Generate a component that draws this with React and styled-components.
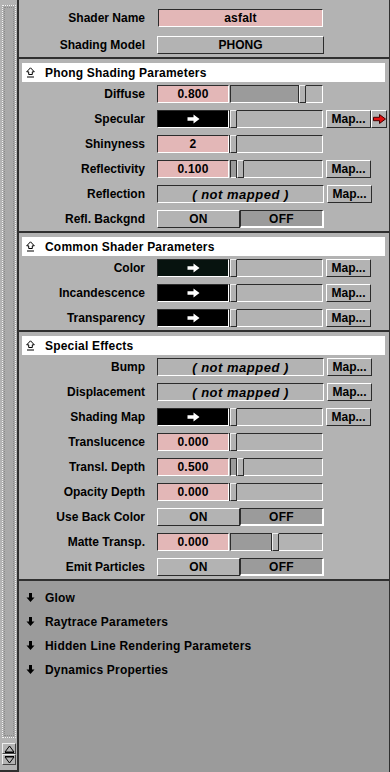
import styled, { createGlobalStyle } from "styled-components";

const GlobalStyle = createGlobalStyle`
  html, body {
    margin: 0;
    padding: 0;
    background: #b3b3b3;
    overflow: hidden;
  }
  body {
    font-family: "Liberation Sans", Arial, sans-serif;
    color: #000;
  }
  * {
    box-sizing: border-box;
  }
`;

const Frame = styled.div`
  display: flex;
  width: 390px;
  height: 772px;
`;

const ScrollBar = styled.div`
  width: 19px;
  flex-shrink: 0;
  border-right: 2px solid #303030;
  border-bottom: 2px solid #303030;
  display: flex;
  flex-direction: column;
  gap: 5px;
  padding: 5px 1px 5px 2px;
  background: #b3b3b3;
`;

const Trough = styled.div`
  flex: 1;
  border: 1px dotted #f4f4f4;
  outline: 1px dotted #8a8a8a;
  outline-offset: -3px;
  background: #a9a9a9;
`;

const StepButton = styled.div`
  height: 11px;
  border: 1px solid #444;
  border-top-color: #eee;
  border-left-color: #eee;
  background: #b3b3b3;
  display: flex;
  align-items: center;
  justify-content: center;
`;

const Main = styled.div`
  flex: 1;
  display: flex;
  flex-direction: column;
  border-right: 1px solid #303030;
  background: #b3b3b3;
`;

const TopBlock = styled.div`
  display: flex;
  flex-direction: column;
  gap: 9px;
  padding: 9px 0 3px;
`;

const Section = styled.section`
  border-top: 2px solid #303030;
  padding-top: 4px;
`;

const Header = styled.div`
  height: 19px;
  margin: 0 4px 0 3px;
  background: #fff;
  display: flex;
  align-items: center;
  gap: 10px;
  padding-left: 4px;
  font-weight: bold;
  font-size: 12px;
  letter-spacing: 0.2px;
`;

const Rows = styled.div`
  display: flex;
  flex-direction: column;
  gap: 7px;
  padding: 3px 0 3px;
`;

const Row = styled.div`
  display: flex;
  align-items: center;
  height: 18px;
`;

const Label = styled.div`
  width: 138px;
  padding-right: 12px;
  text-align: right;
  font-weight: bold;
  font-size: 12px;
  white-space: nowrap;
  flex-shrink: 0;
`;

const sunken = `
  border: 1px solid #fff;
  border-top-color: #2c2c2c;
  border-left-color: #2c2c2c;
`;

const raised = `
  border: 1px solid #2c2c2c;
  border-top-color: #fff;
  border-left-color: #fff;
`;

const Field = styled.div`
  ${sunken}
  height: 18px;
  width: ${(p) => p.$w || 72}px;
  margin-left: ${(p) => p.$ml || 0}px;
  background: ${(p) => p.$bg || "#e3b7b7"};
  display: flex;
  align-items: center;
  justify-content: center;
  font-weight: bold;
  font-size: ${(p) => (p.$italic ? 13 : 12)}px;
  letter-spacing: ${(p) => (p.$italic ? 0.5 : 0.2)}px;
  font-style: ${(p) => (p.$italic ? "italic" : "normal")};
  white-space: pre;
  flex-shrink: 0;
`;

const Button = styled.div`
  ${raised}
  height: 18px;
  width: ${(p) => p.$w || 45}px;
  margin-left: ${(p) => p.$ml || 0}px;
  background: #b3b3b3;
  display: flex;
  align-items: center;
  justify-content: center;
  font-weight: bold;
  font-size: 12px;
  flex-shrink: 0;
`;

const Toggle = styled.div`
  display: flex;
  width: 167px;
  height: 18px;
`;

const ToggleHalf = styled.div`
  flex: 1;
  display: flex;
  align-items: center;
  justify-content: center;
  font-weight: bold;
  font-size: 12px;
  letter-spacing: 0.3px;
  ${(p) =>
    p.$on
      ? `border: 1px solid #fff; border-top-color: #2c2c2c; border-left-color: #2c2c2c; border-right-width: 2px; border-bottom-width: 2px; background: #9b9b9b;`
      : `border: 1px solid #2c2c2c; border-top-color: #fff; border-left-color: #fff; background: #b3b3b3;`}
`;

const Slider = styled.div`
  ${sunken}
  position: relative;
  width: 93px;
  height: 18px;
  margin-left: 1px;
  background: #b3b3b3;
  flex-shrink: 0;
`;

const SliderFill = styled.div`
  height: 100%;
  width: ${(p) => p.$pos}px;
  background: #9b9b9b;
`;

const Thumb = styled.div`
  position: absolute;
  top: -1px;
  bottom: -1px;
  left: ${(p) => p.$pos - 1}px;
  width: 7px;
  border: 1px solid #2c2c2c;
  border-top-color: #eee;
  border-left-color: #eee;
  box-shadow: -1px 0 0 #2c2c2c;
  background: #b3b3b3;
`;

const Collapsed = styled.div`
  flex: 1;
  background: #9b9b9b;
  border-top: 2px solid #303030;
  padding-top: 5px;
`;

const CollapsedItem = styled.div`
  height: 24px;
  display: flex;
  align-items: center;
  gap: 10px;
  padding-left: 7px;
  font-weight: bold;
  font-size: 12px;
  letter-spacing: 0.2px;
`;

const IconBox = styled.span`
  width: 9px;
  display: inline-flex;
  justify-content: center;
`;

const OpenIcon = () => (
  <IconBox>
    <svg width="9" height="12" viewBox="0 0 9 12">
      <path
        d="M4.5 0.8 L8.3 4.8 H6.3 V7.5 H2.7 V4.8 H0.7 Z"
        fill="none"
        stroke="#000"
        strokeWidth="1"
      />
      <line x1="1" y1="10" x2="8" y2="10" stroke="#000" strokeWidth="1" />
    </svg>
  </IconBox>
);

const ClosedIcon = () => (
  <IconBox>
    <svg width="9" height="10" viewBox="0 0 9 10">
      <path d="M3 0 H6 V4.5 H8.5 L4.5 9 L0.5 4.5 H3 Z" fill="#000" />
    </svg>
  </IconBox>
);

const ArrowGlyph = ({ color = "#fff", stroke = "none" }) => (
  <svg width="13" height="10" viewBox="0 0 13 10">
    <path
      d="M0.5 3.3 H6.5 V0.5 L12.5 5 L6.5 9.5 V6.7 H0.5 Z"
      fill={color}
      stroke={stroke}
      strokeWidth="1"
    />
  </svg>
);

const StepIcon = ({ down }) => (
  <svg width="11" height="8" viewBox="0 0 11 8">
    <path
      d={down ? "M1 1 H10 L5.5 7 Z" : "M5.5 1 L10 7 H1 Z"}
      fill="none"
      stroke="#000"
      strokeWidth="1"
    />
    <line
      x1="1"
      x2="10"
      y1={down ? 0.5 : 7.5}
      y2={down ? 0.5 : 7.5}
      stroke="#000"
    />
  </svg>
);

const ValueSlider = ({ pos }) => (
  <Slider>
    <SliderFill $pos={pos} />
    <Thumb $pos={pos} />
  </Slider>
);

const Swatch = ({ bg = "#000" }) => (
  <Field $bg={bg}>
    <ArrowGlyph />
  </Field>
);

const NotMapped = () => (
  <Field $w={167} $bg="#b3b3b3" $italic>
    ( not mapped )
  </Field>
);

const OnOff = () => (
  <Toggle>
    <ToggleHalf>ON</ToggleHalf>
    <ToggleHalf $on>OFF</ToggleHalf>
  </Toggle>
);

const MapButton = () => <Button $ml={3}>Map...</Button>;

export default function App() {
  return (
    <>
      <GlobalStyle />
      <Frame>
        <ScrollBar>
          <Trough />
          <div>
            <StepButton>
              <StepIcon />
            </StepButton>
            <StepButton>
              <StepIcon down />
            </StepButton>
          </div>
        </ScrollBar>
        <Main>
          <TopBlock>
            <Row>
              <Label>Shader Name</Label>
              <Field $w={165} $ml={1}>
                asfalt
              </Field>
            </Row>
            <Row>
              <Label>Shading Model</Label>
              <Button $w={167}>PHONG</Button>
            </Row>
          </TopBlock>

          <Section>
            <Header>
              <OpenIcon />
              Phong Shading Parameters
            </Header>
            <Rows>
              <Row>
                <Label>Diffuse</Label>
                <Field>0.800</Field>
                <ValueSlider pos={69} />
              </Row>
              <Row>
                <Label>Specular</Label>
                <Swatch />
                <ValueSlider pos={0} />
                <MapButton />
                <Button $w={16}>
                  <ArrowGlyph color="#e01010" stroke="#400" />
                </Button>
              </Row>
              <Row>
                <Label>Shinyness</Label>
                <Field>2</Field>
                <ValueSlider pos={0} />
              </Row>
              <Row>
                <Label>Reflectivity</Label>
                <Field>0.100</Field>
                <ValueSlider pos={7} />
                <MapButton />
              </Row>
              <Row>
                <Label>Reflection</Label>
                <NotMapped />
                <MapButton />
              </Row>
              <Row>
                <Label>Refl. Backgnd</Label>
                <OnOff />
              </Row>
            </Rows>
          </Section>

          <Section>
            <Header>
              <OpenIcon />
              Common Shader Parameters
            </Header>
            <Rows>
              <Row>
                <Label>Color</Label>
                <Swatch bg="#07130f" />
                <ValueSlider pos={0} />
                <MapButton />
              </Row>
              <Row>
                <Label>Incandescence</Label>
                <Swatch />
                <ValueSlider pos={0} />
                <MapButton />
              </Row>
              <Row>
                <Label>Transparency</Label>
                <Swatch />
                <ValueSlider pos={0} />
                <MapButton />
              </Row>
            </Rows>
          </Section>

          <Section>
            <Header>
              <OpenIcon />
              Special Effects
            </Header>
            <Rows>
              <Row>
                <Label>Bump</Label>
                <NotMapped />
                <MapButton />
              </Row>
              <Row>
                <Label>Displacement</Label>
                <NotMapped />
                <MapButton />
              </Row>
              <Row>
                <Label>Shading Map</Label>
                <Swatch />
                <ValueSlider pos={0} />
                <MapButton />
              </Row>
              <Row>
                <Label>Translucence</Label>
                <Field>0.000</Field>
                <ValueSlider pos={0} />
              </Row>
              <Row>
                <Label>Transl. Depth</Label>
                <Field>0.500</Field>
                <ValueSlider pos={7} />
              </Row>
              <Row>
                <Label>Opacity Depth</Label>
                <Field>0.000</Field>
                <ValueSlider pos={0} />
              </Row>
              <Row>
                <Label>Use Back Color</Label>
                <OnOff />
              </Row>
              <Row>
                <Label>Matte Transp.</Label>
                <Field>0.000</Field>
                <ValueSlider pos={42} />
              </Row>
              <Row>
                <Label>Emit Particles</Label>
                <OnOff />
              </Row>
            </Rows>
          </Section>

          <Collapsed>
            {[
              "Glow",
              "Raytrace Parameters",
              "Hidden Line Rendering Parameters",
              "Dynamics Properties",
            ].map((t) => (
              <CollapsedItem key={t}>
                <ClosedIcon />
                {t}
              </CollapsedItem>
            ))}
          </Collapsed>
        </Main>
      </Frame>
    </>
  );
}
